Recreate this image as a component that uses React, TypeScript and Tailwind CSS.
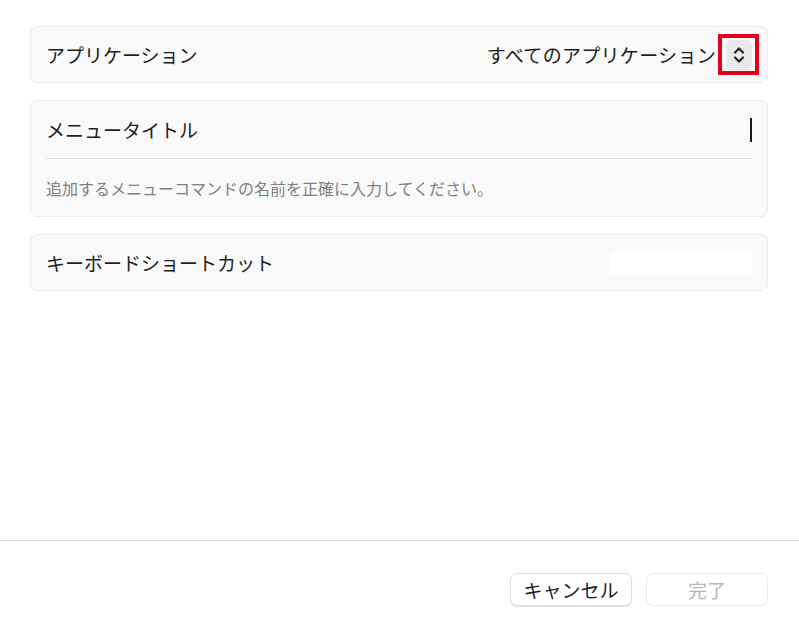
import React from "react";

export default function App() {
  return (
    <div
      className="w-[799px] h-[635px] bg-white flex flex-col text-[#1d1d1d]"
      style={{ fontFamily: '"Noto Sans CJK JP", "Noto Sans", sans-serif' }}
    >
      <div className="flex-1 flex flex-col pl-[30px] pr-[31px] pt-[26px] gap-[17px]">
        {/* Application row */}
        <div className="h-[57px] rounded-[7px] bg-[#f9f9f9] border border-[#ececec] flex items-center pl-[15px] pr-[8px]">
          <span className="text-[19px] leading-none">アプリケーション</span>
          <div className="ml-auto flex items-center">
            <span className="text-[19px] leading-none tracking-[0.3px] mr-[2px]">すべてのアプリケーション</span>
            <div className="w-[41px] h-[41px] border-[4px] border-[#e4001b] flex items-center justify-center">
              <div className="w-[26px] h-[30px] rounded-[5px] bg-[#e9e9e9] flex items-center justify-center">
                <svg width="12" height="20" viewBox="0 0 12 20" fill="none" stroke="#222" strokeWidth="2.2" strokeLinecap="round" strokeLinejoin="round">
                  <path d="M2 7.5 L6 3.5 L10 7.5" />
                  <path d="M2 12.5 L6 16.5 L10 12.5" />
                </svg>
              </div>
            </div>
          </div>
        </div>

        {/* Menu title */}
        <div className="rounded-[7px] bg-[#f9f9f9] border border-[#ececec] flex flex-col">
          <div className="h-[57px] flex items-center pl-[15px] pr-[15px]">
            <span className="text-[19px] leading-none">メニュータイトル</span>
            <div className="ml-auto w-[2px] h-[24px] bg-[#1a1a1a]" />
          </div>
          <div className="mx-[15px] h-px bg-[#e2e2e2]" />
          <div className="h-[57px] flex items-center pl-[15px]">
            <span className="text-[16px] leading-none text-[#808080]">
              追加するメニューコマンドの名前を正確に入力してください。
            </span>
          </div>
        </div>

        {/* Keyboard shortcut */}
        <div className="h-[57px] rounded-[7px] bg-[#f9f9f9] border border-[#ececec] flex items-center pl-[15px] pr-[15px]">
          <span className="text-[19px] leading-none">キーボードショートカット</span>
          <div className="ml-auto w-[143px] h-[24px] bg-white rounded-[3px]" />
        </div>
      </div>

      {/* Footer */}
      <div className="h-px bg-[#dcdcdc] mb-[32px]" />
      <div className="flex justify-end gap-[14px] pr-[31px] pb-[29px]">
        <button className="w-[122px] h-[33px] rounded-[7px] bg-white border border-[#dedede] shadow-[0_1px_1px_rgba(0,0,0,0.12)] text-[19px] leading-none text-[#1d1d1d] flex items-center justify-center">
          キャンセル
        </button>
        <button className="w-[122px] h-[33px] rounded-[7px] bg-white border border-[#ececec] text-[19px] leading-none text-[#b5b5b5] flex items-center justify-center">
          完了
        </button>
      </div>
    </div>
  );
}
